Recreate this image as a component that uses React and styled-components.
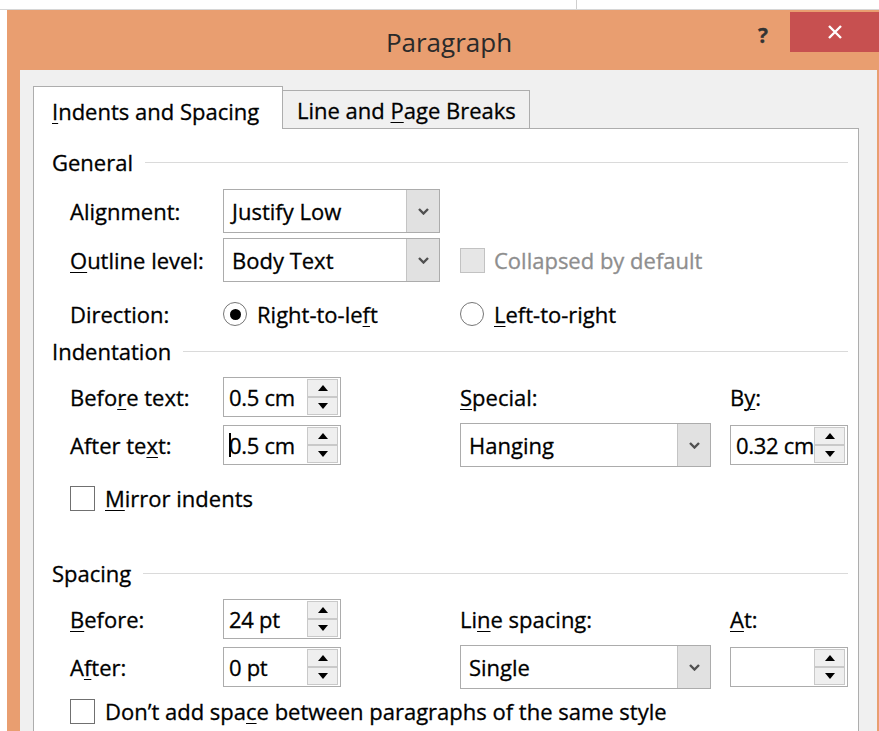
import React from 'react';
import styled, { createGlobalStyle, css } from 'styled-components';

const GlobalStyle = createGlobalStyle`
  html, body {
    margin: 0;
    padding: 0;
    background: #fff;
  }
  body {
    font-family: "Open Sans", "Noto Sans", "Liberation Sans", sans-serif;
    font-size: 22px;
    color: #000;
    -webkit-text-stroke: 0.3px currentColor;
    overflow: hidden;
  }
`;

const Screen = styled.div`
  display: flex;
  flex-direction: column;
  height: 100vh;
`;

// thin strip of the desktop showing above the dialog
const TopStrip = styled.div`
  flex: none;
  height: 9px;
  display: flex;
  border-bottom: 1px solid #d6d6d6;
`;

const Tick = styled.div`
  width: 1px;
  margin-left: 576px;
  background: #cfcfcf;
`;

const Window = styled.div`
  flex: 1;
  min-height: 0;
  margin-left: 7px;
  background: #e99e70;
  display: flex;
  flex-direction: column;
`;

const TitleBar = styled.div`
  flex: none;
  height: 60px;
  display: grid;
  grid-template-columns: 1fr auto 1fr;
  align-items: start;
`;

const Title = styled.div`
  grid-column: 2;
  margin-top: 17px;
  padding-left: 12px;
  font-size: 26px;
  line-height: 30px;
  color: #2a2a2a;
  -webkit-text-stroke: 0;
`;

const Controls = styled.div`
  grid-column: 3;
  justify-self: end;
  display: flex;
  align-items: flex-start;
`;

const HelpButton = styled.div`
  margin-top: 12px;
  margin-right: 22px;
  font-size: 21px;
  font-weight: 700;
  line-height: 26px;
  color: #333;
`;

const CloseButton = styled.div`
  width: 89px;
  height: 40px;
  margin-top: 2px;
  background: #c75050;
  display: flex;
  align-items: center;
  justify-content: center;
`;

const Body = styled.div`
  flex: 1;
  min-height: 0;
  margin: 0 2px 0 13px;
  padding: 16px 18px 0 13px;
  background: #f0f0f0;
  display: flex;
  flex-direction: column;
`;

const TabStrip = styled.div`
  flex: none;
  height: 42px;
  display: flex;
  align-items: flex-end;
`;

const Tab = styled.div`
  box-sizing: border-box;
  position: relative;
  white-space: nowrap;
  line-height: 30px;
  border: 1px solid #adadad;
  border-bottom: none;
  ${({ $active }) =>
    $active
      ? css`
          z-index: 1;
          width: 250px;
          height: 43px;
          margin-bottom: -1px;
          padding: 9px 0 0 18px;
          background: #fff;
        `
      : css`
          width: 247px;
          height: 38px;
          padding: 4px 0 0 14px;
          border-left: none;
          background: #f0f0f0;
        `}
`;

const Sheet = styled.div`
  flex: 1;
  background: #fff;
  border: 1px solid #adadad;
  border-bottom: none;
  padding: 18px 10px 0 18px;
`;

const SectionHeader = styled.div`
  display: flex;
  align-items: center;
  gap: 12px;
  height: 30px;
  margin-top: ${({ $top }) => $top}px;

  &::after {
    content: '';
    flex: 1;
    height: 1px;
    background: #dadada;
  }
`;

const FieldRow = styled.div`
  display: grid;
  grid-template-columns: 153px 237px 270px 118px;
  align-items: center;
  height: ${({ $h }) => $h}px;
  margin-top: ${({ $top }) => $top}px;
  margin-left: 18px;
`;

const Label = styled.div`
  white-space: nowrap;
  line-height: 30px;
`;

const Key = styled.span`
  text-decoration: underline;
  text-underline-offset: 3px;
  text-decoration-thickness: 1px;
`;

const Select = styled.div`
  box-sizing: border-box;
  width: ${({ $w }) => $w}px;
  height: 44px;
  border: 1px solid #acacac;
  background: #fff;
  display: flex;
`;

const SelectValue = styled.div`
  flex: 1;
  padding-left: 8px;
  display: flex;
  align-items: center;
  white-space: nowrap;
`;

const SelectButton = styled.div`
  width: 32px;
  background: #e1e1e1;
  border-left: 1px solid #c4c4c4;
  display: flex;
  align-items: center;
  justify-content: center;
`;

const Spinner = styled.div`
  box-sizing: border-box;
  width: 118px;
  height: 40px;
  border: 1px solid #acacac;
  background: #fff;
  display: flex;
`;

const SpinValue = styled.div`
  flex: 1;
  min-width: 0;
  padding-left: 5px;
  display: flex;
  align-items: center;
  white-space: nowrap;
  letter-spacing: -0.3px;
`;

const SpinButtons = styled.div`
  width: 31px;
  margin: 1px 2px 1px 0;
  display: flex;
  flex-direction: column;
`;

const SpinButton = styled.div`
  flex: 1;
  background: #efefef;
  border: 1px solid #c9c9c9;
  display: flex;
  align-items: center;
  justify-content: center;
`;

const Caret = styled.span`
  display: inline-block;
  width: 2px;
  height: 24px;
  margin-right: -2px;
  background: #000;
`;

const Choice = styled.div`
  display: flex;
  align-items: center;
  gap: ${({ $gap }) => $gap || 10}px;
  white-space: nowrap;
  color: ${({ $disabled }) => ($disabled ? '#8e8e8e' : '#000')};
  grid-column: ${({ $span }) => ($span ? '1 / -1' : 'auto')};
`;

const RadioDot = styled.span`
  box-sizing: border-box;
  flex: none;
  width: 24px;
  height: 24px;
  border-radius: 50%;
  border: 1.5px solid #767676;
  background: #fff;
  display: flex;
  align-items: center;
  justify-content: center;

  &::after {
    content: '';
    width: 11px;
    height: 11px;
    border-radius: 50%;
    background: #000;
    display: ${({ $checked }) => ($checked ? 'block' : 'none')};
  }
`;

const CheckBox = styled.span`
  box-sizing: border-box;
  flex: none;
  width: 25px;
  height: 25px;
  border: 1.5px solid ${({ $disabled }) => ($disabled ? '#c2c2c2' : '#707070')};
  background: ${({ $disabled }) => ($disabled ? '#e6e6e6' : '#fff')};
`;

const Chevron = () => (
  <svg width="11" height="7" viewBox="0 0 11 7">
    <polyline points="1,1 5.5,5.5 10,1" fill="none" stroke="#505050" strokeWidth="2.4" />
  </svg>
);

const Arrow = ({ up }) => (
  <svg width="10" height="6" viewBox="0 0 10 6">
    <polygon points={up ? '5,0 10,6 0,6' : '0,0 10,0 5,6'} fill="#000" />
  </svg>
);

const Dropdown = ({ width, children }) => (
  <Select $w={width}>
    <SelectValue>{children}</SelectValue>
    <SelectButton>
      <Chevron />
    </SelectButton>
  </Select>
);

const NumberBox = ({ children }) => (
  <Spinner>
    <SpinValue>{children}</SpinValue>
    <SpinButtons>
      <SpinButton>
        <Arrow up />
      </SpinButton>
      <SpinButton>
        <Arrow />
      </SpinButton>
    </SpinButtons>
  </Spinner>
);

const App = () => (
  <Screen>
    <GlobalStyle />
    <TopStrip>
      <Tick />
    </TopStrip>
    <Window>
      <TitleBar>
        <Title>Paragraph</Title>
        <Controls>
          <HelpButton>?</HelpButton>
          <CloseButton>
            <svg width="16" height="14" viewBox="0 0 16 14">
              <path d="M2 1 L14 13 M14 1 L2 13" stroke="#fff" strokeWidth="2.4" />
            </svg>
          </CloseButton>
        </Controls>
      </TitleBar>
      <Body>
        <TabStrip>
          <Tab $active>
            <Key>I</Key>ndents and Spacing
          </Tab>
          <Tab>
            Line and <Key>P</Key>age Breaks
          </Tab>
        </TabStrip>
        <Sheet>
          <SectionHeader $top={0}>General</SectionHeader>
          <FieldRow $h={44} $top={12}>
            <Label>
              Ali<Key>g</Key>nment:
            </Label>
            <Dropdown width={217}>Justify Low</Dropdown>
          </FieldRow>
          <FieldRow $h={44} $top={5}>
            <Label>
              <Key>O</Key>utline level:
            </Label>
            <Dropdown width={217}>Body Text</Dropdown>
            <Choice $disabled $gap={9}>
              <CheckBox $disabled />
              Collapsed by default
            </Choice>
          </FieldRow>
          <FieldRow $h={30} $top={17}>
            <Label>Direction:</Label>
            <Choice>
              <RadioDot $checked />
              <span>
                Right-to-le<Key>f</Key>t
              </span>
            </Choice>
            <Choice>
              <RadioDot />
              <span>
                <Key>L</Key>eft-to-right
              </span>
            </Choice>
          </FieldRow>

          <SectionHeader $top={7}>Indentation</SectionHeader>
          <FieldRow $h={40} $top={11}>
            <Label>
              Befo<Key>r</Key>e text:
            </Label>
            <NumberBox>0.5 cm</NumberBox>
            <Label>
              <Key>S</Key>pecial:
            </Label>
            <Label>
              B<Key>y</Key>:
            </Label>
          </FieldRow>
          <FieldRow $h={44} $top={6}>
            <Label>
              After te<Key>x</Key>t:
            </Label>
            <NumberBox>
              <Caret />
              0.5 cm
            </NumberBox>
            <Dropdown width={251}>Hanging</Dropdown>
            <NumberBox>0.32 cm</NumberBox>
          </FieldRow>
          <FieldRow $h={30} $top={16}>
            <Choice $span>
              <CheckBox />
              <span>
                <Key>M</Key>irror indents
              </span>
            </Choice>
          </FieldRow>

          <SectionHeader $top={45}>Spacing</SectionHeader>
          <FieldRow $h={40} $top={11}>
            <Label>
              <Key>B</Key>efore:
            </Label>
            <NumberBox>24 pt</NumberBox>
            <Label>
              Li<Key>n</Key>e spacing:
            </Label>
            <Label>
              <Key>A</Key>t:
            </Label>
          </FieldRow>
          <FieldRow $h={44} $top={6}>
            <Label>
              A<Key>f</Key>ter:
            </Label>
            <NumberBox>0 pt</NumberBox>
            <Dropdown width={251}>Single</Dropdown>
            <NumberBox />
          </FieldRow>
          <FieldRow $h={30} $top={7}>
            <Choice $span>
              <CheckBox />
              <span>
                Don’t add spa<Key>c</Key>e between paragraphs of the same style
              </span>
            </Choice>
          </FieldRow>
        </Sheet>
      </Body>
    </Window>
  </Screen>
);

export default App;
